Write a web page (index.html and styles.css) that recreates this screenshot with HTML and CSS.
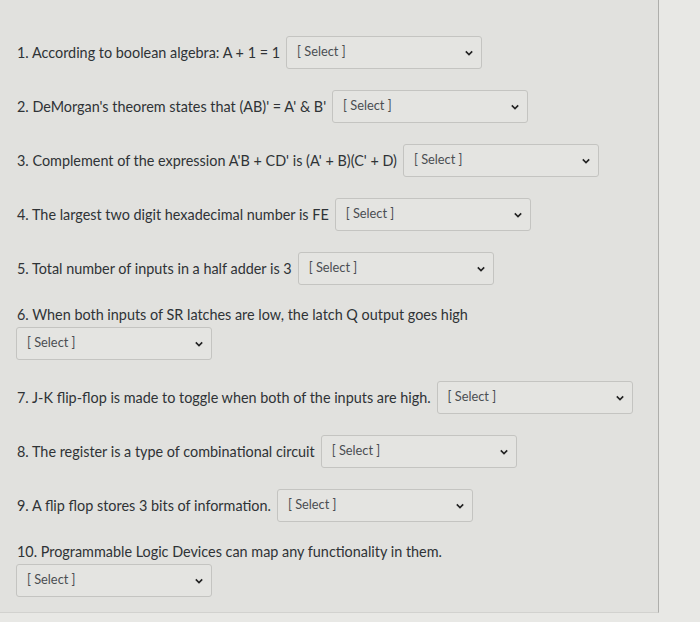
FILE: index.html
```html
<!DOCTYPE html>
<html lang="en">
<head>
    <meta charset="UTF-8">
    <meta name="viewport" content="width=device-width, initial-scale=1.0">
    <title>Quiz</title>
    <link rel="stylesheet" href="styles.css">
</head>
<body>
    <div class="quiz">
        <div class="question">
            <span class="q-text">1. According to boolean algebra: A + 1 = 1</span>
            <span class="dropdown"><span class="placeholder">[ Select ]</span><svg class="chevron" viewBox="0 0 10 6"><path d="M1 1 L5 5 L9 1" /></svg></span>
        </div>
        <div class="question">
            <span class="q-text">2. DeMorgan's theorem states that (AB)' = A' &amp; B'</span>
            <span class="dropdown"><span class="placeholder">[ Select ]</span><svg class="chevron" viewBox="0 0 10 6"><path d="M1 1 L5 5 L9 1" /></svg></span>
        </div>
        <div class="question">
            <span class="q-text">3. Complement of the expression A'B + CD' is (A' + B)(C' + D)</span>
            <span class="dropdown"><span class="placeholder">[ Select ]</span><svg class="chevron" viewBox="0 0 10 6"><path d="M1 1 L5 5 L9 1" /></svg></span>
        </div>
        <div class="question">
            <span class="q-text">4. The largest two digit hexadecimal number is FE</span>
            <span class="dropdown"><span class="placeholder">[ Select ]</span><svg class="chevron" viewBox="0 0 10 6"><path d="M1 1 L5 5 L9 1" /></svg></span>
        </div>
        <div class="question">
            <span class="q-text">5. Total number of inputs in a half adder is 3</span>
            <span class="dropdown"><span class="placeholder">[ Select ]</span><svg class="chevron" viewBox="0 0 10 6"><path d="M1 1 L5 5 L9 1" /></svg></span>
        </div>
        <div class="question stacked">
            <span class="q-text">6. When both inputs of SR latches are low, the latch Q output goes high</span>
            <span class="dropdown"><span class="placeholder">[ Select ]</span><svg class="chevron" viewBox="0 0 10 6"><path d="M1 1 L5 5 L9 1" /></svg></span>
        </div>
        <div class="question">
            <span class="q-text">7. J-K flip-flop is made to toggle when both of the inputs are high.</span>
            <span class="dropdown"><span class="placeholder">[ Select ]</span><svg class="chevron" viewBox="0 0 10 6"><path d="M1 1 L5 5 L9 1" /></svg></span>
        </div>
        <div class="question">
            <span class="q-text">8. The register is a type of combinational circuit</span>
            <span class="dropdown"><span class="placeholder">[ Select ]</span><svg class="chevron" viewBox="0 0 10 6"><path d="M1 1 L5 5 L9 1" /></svg></span>
        </div>
        <div class="question">
            <span class="q-text">9. A flip flop stores 3 bits of information.</span>
            <span class="dropdown"><span class="placeholder">[ Select ]</span><svg class="chevron" viewBox="0 0 10 6"><path d="M1 1 L5 5 L9 1" /></svg></span>
        </div>
        <div class="question stacked">
            <span class="q-text">10. Programmable Logic Devices can map any functionality in them.</span>
            <span class="dropdown"><span class="placeholder">[ Select ]</span><svg class="chevron" viewBox="0 0 10 6"><path d="M1 1 L5 5 L9 1" /></svg></span>
        </div>
    </div>
</body>
</html>
```

FILE: styles.css
```css
body {
    margin: 0;
    font-family: Lato, "Liberation Sans", sans-serif;
    color: #2f3336;
    background-color: #e8e8e5;
}
.quiz {
    width: 641px;
    height: 576px;
    padding: 36px 0 0 17px;
    background-color: #e1e1de;
    border-top: 2px solid #f1f1ef;
    border-right: 1px solid #aeaeab;
    border-bottom: 1px solid #d2d2cf;
    margin-top: -2px;
}
.question {
    display: flex;
    align-items: center;
    gap: 6px;
    margin-bottom: 21px;
    font-size: 14.4px;
}
.question.stacked {
    flex-direction: column;
    align-items: flex-start;
    gap: 4px;
}
.question.stacked .dropdown {
    margin-left: -1px;
}
.dropdown {
    display: inline-flex;
    align-items: center;
    justify-content: space-between;
    box-sizing: border-box;
    width: 196px;
    height: 33px;
    padding: 0 8px 0 10px;
    background-color: #e4e4e1;
    border: 1px solid #c4c4c1;
    border-radius: 3px;
}
.placeholder {
    font-size: 12.8px;
    color: #4a4e52;
    margin-top: -4px;
}
.chevron {
    width: 8px;
    height: 6px;
    fill: none;
    stroke: #222;
    stroke-width: 2;
}
```
